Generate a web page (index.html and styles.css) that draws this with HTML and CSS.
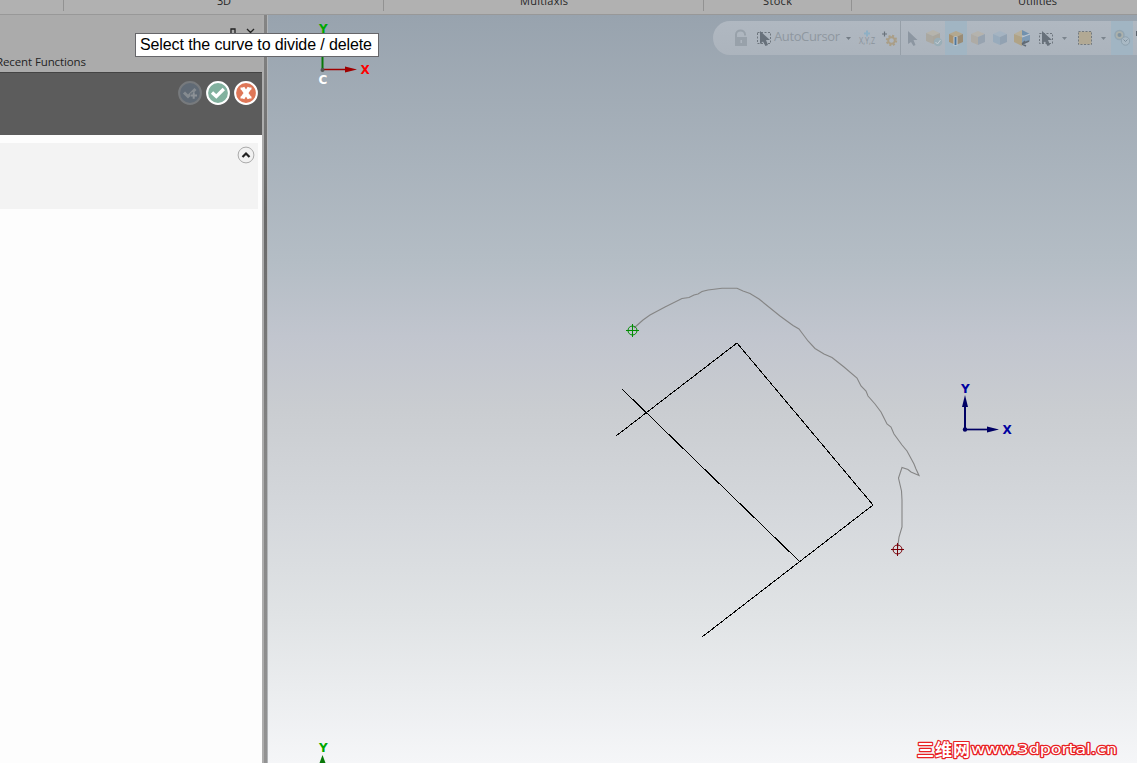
FILE: index.html
```html
<!DOCTYPE html>
<html lang="en">
<head>
<meta charset="utf-8">
<title>Divide / delete</title>
<link rel="stylesheet" href="styles.css">
</head>
<body>
<div class="app">
  <header class="ribbon">
    <div class="group g-first"></div>
    <div class="group g-wide"><svg width="14" height="14"><text x="0" y="5" textLength="14">3D</text></svg></div>
    <div class="group g-wide"><svg width="48" height="14"><text x="0" y="5" textLength="48">Multiaxis</text></svg></div>
    <div class="group g-stock"><svg width="29" height="14"><text x="0" y="5" textLength="29">Stock</text></svg></div>
    <div class="group g-util"><svg width="39" height="14"><text x="0" y="5" textLength="39">Utilities</text></svg></div>
  </header>
  <div class="work">
    <aside class="panel">
      <div class="panel-head">
        <svg class="window-icons" width="32" height="16" viewBox="0 0 32 16"><path d="M4 10V2h4v8M2 10h9M8 2v8M20 2l7 7M27 2l-7 7" fill="none" stroke="#222" stroke-width="1.3"/></svg>
        <svg class="recent" width="90" height="18"><text x="-4" y="12" textLength="90">Recent Functions</text></svg>
      </div>
      <div class="actions">
        <svg width="24" height="24" viewBox="0 0 24 24"><circle cx="12" cy="12" r="10.900" fill="#606a75" stroke="#777a7d" stroke-width="2"/><path d="M6 11.500l4 4 7.500-7.500" fill="none" stroke="#858b90" stroke-width="3"/><path d="M12 14.500h7.500M15.700 11v7.500" stroke="#606a75" stroke-width="4"/><path d="M12.500 14.500h6.500M15.700 11.300v6.500" stroke="#8d9297" stroke-width="2"/></svg>
        <svg width="24" height="24" viewBox="0 0 24 24"><circle cx="12" cy="12" r="10.900" fill="#82b19f" stroke="#fff" stroke-width="2"/><path d="M6 11.500l4.300 4 7.500-7.500" fill="none" stroke="#fff" stroke-width="3.300"/></svg>
        <svg width="24" height="24" viewBox="0 0 24 24"><circle cx="12" cy="12" r="10.900" fill="#df7758" stroke="#fff" stroke-width="2"/><path d="M8.500 7l7 10M15.500 7l-7 10" stroke="#fff" stroke-width="4"/><path d="M6.500 7.500h4M13.500 7.500h4M6.500 16.500h4M13.500 16.500h4" stroke="#fff" stroke-width="2"/></svg>
      </div>
      <div class="section">
        <svg width="18" height="18" viewBox="0 0 18 18"><circle cx="9" cy="9" r="7.900" fill="#f1f1f1" stroke="#aaa"/><path d="M5.500 11L9 7.500l3.500 3.500" fill="none" stroke="#222" stroke-width="2.200"/></svg>
      </div>
    </aside>
    <div class="splitter"></div>
    <main class="viewport">
      <svg class="drawing" width="869" height="748" viewBox="268 15 869 748">
        <g fill="none" stroke="#000" shape-rendering="crispEdges">
          <path d="M616 436L737 343 873 505 702 637M622 389L800 562"/>
        </g>
        <path fill="none" stroke="#858585" stroke-width="1.100" d="M634 328L643 320 650 315 665 307 682 298.500 689 297.500 694 295 698 294 702 291.500 708 290 722 288.300 737 288.300 743 291 750 293.500 759 299 780 316 793 325.500 799 329 802 333 808 341 815 348.500 824 354 832 357.500 844 367 857 378 861 386 866 391 868 396 875 404 881 412 887 424 891 427 894 434 902 445 907 451 914 464 916 469 919 475.500 911 472 908 469.500 902 467.500 898.500 478 901.500 491 902 500 902 527 899 537 897.500 549"/>
        <g fill="none" stroke="#008c00"><circle cx="632.500" cy="330.500" r="4.500"/><path d="M626 330.500h13M632.500 324v13"/></g>
        <g fill="none" stroke="#780008"><circle cx="897.500" cy="549.500" r="4.500"/><path d="M891 549.500h13M897.500 543v13"/></g>
        <g class="axis">
          <path d="M322.500 70V50" stroke="#087808" stroke-width="2"/><path d="M323 69.500h25" stroke="#a00000" stroke-width="1.500"/><path d="M345 66.500l12 3-12 3z" fill="#a00000"/><circle cx="322.500" cy="70" r="2" fill="#555"/>
          <text x="319" y="33" fill="#00a800">Y</text><text x="360.500" y="74" fill="#f00">X</text><text x="318.500" y="84" fill="#fff">C</text>
          <path d="M965 430V402" stroke="#000064" stroke-width="2"/><path d="M965 395l3 12h-6z" fill="#000064"/><path d="M965 429.500h24" stroke="#000064" stroke-width="1.700"/><path d="M987 426.500l12 3-12 3z" fill="#000064"/><circle cx="965" cy="429.500" r="2.200" fill="#000064"/>
          <text x="961" y="393" fill="#0000a0">Y</text><text x="1002.500" y="434" fill="#0000a0">X</text>
          <text x="319" y="752" fill="#00a800">Y</text><path d="M322.500 755l3 8h-6z" fill="#087808"/>
        </g>
        <g class="mark"><text class="mark-cjk" x="917" y="756" textLength="53">三维网</text><text class="mark-url" x="971" y="754" textLength="146" lengthAdjust="spacingAndGlyphs">www.3dportal.cn</text></g>
      </svg>
      <div class="toolbar">
        <div class="tool" style="width:38px"><svg width="38" height="34" viewBox="0 0 38 34"><path d="M23 16v-2.500c0-5.500 9-5.500 9 0v1" fill="none" stroke="#98a1aa" stroke-width="2"/><path d="M22 16h12v9H22zm5.500 3v3h1.500v-3z" fill="#98a1aa" fill-rule="evenodd"/></svg></div>
        <div class="tool" style="width:104px"><svg width="104" height="34" viewBox="0 0 104 34"><rect x="6.500" y="11.500" width="13" height="11" fill="none" stroke="#6e767e" stroke-dasharray="2 1.500"/><path d="M9 10v13l3-2.500 2.500 4.500 2.500-1-2-5h4z" fill="#68717b"/><text class="cursor-label" x="23" y="20" textLength="66">AutoCursor</text><path d="M95 16h5l-2.500 3z" fill="#737c85"/></svg></div>
        <div class="tool" style="width:24px"><svg width="24" height="34" viewBox="0 0 24 34"><path d="M9 12.500h6M12 9.500v6" stroke="#8eb0c5" stroke-width="2"/><text class="xyz" x="4" y="23" textLength="16" lengthAdjust="spacingAndGlyphs">X,Y,Z</text></svg></div>
        <div class="tool edge" style="width:22px"><svg width="21" height="34" viewBox="0 0 21 34"><path d="M3 13h5M5.500 10.500v5" stroke="#68717a" stroke-width="1.200"/><circle cx="12.500" cy="19.500" r="4.700" fill="none" stroke="#aa9e87" stroke-width="2" stroke-dasharray="2 1.700"/><circle cx="12.500" cy="19.500" r="3.300" fill="none" stroke="#aa9e87" stroke-width="2"/></svg></div>
        <div class="tool" style="width:22px"><svg width="22" height="34" viewBox="0 0 22 34"><path d="M7 10v13l3-2 2.500 4 2-1-2-5h4z" fill="#8c96a1"/></svg></div>
        <div class="tool" style="width:22px"><svg width="22" height="34" viewBox="0 0 22 34"><path d="M3 12l7-3 7 3-7 3z" fill="#b6b4ac"/><path d="M3 12l7 3v8l-7-3z" fill="#aaa8a1"/><path d="M10 15l7-3v8l-7 3z" fill="#a9a69d"/><circle cx="15" cy="21" r="4.300" fill="#9aaeb7"/><path d="M12.500 21l2 2 3-4" fill="none" stroke="#c7d0d6"/></svg></div>
        <div class="tool active" style="width:22px"><svg width="22" height="34" viewBox="0 0 22 34"><path d="M4 13l7-3 7 3-7 3z" fill="#b3a88f"/><path d="M4 13l7 3v8l-7-3z" fill="#a7916f"/><path d="M11 16l7-3v8l-7 3z" fill="#9a8c76"/><path d="M8.500 15.500h4v9h-4z" fill="#c5d0d8"/><path d="M10.500 16v8" stroke="#50769a" stroke-width="2"/></svg></div>
        <div class="tool" style="width:22px"><svg width="22" height="34" viewBox="0 0 22 34"><path d="M4 13l7-3 7 3-7 3z" fill="#b5b3ad"/><path d="M4 13l7 3v8l-7-3z" fill="#aeaba5"/><path d="M11 16l7-3v8l-7 3z" fill="#97a3b0"/></svg></div>
        <div class="tool" style="width:22px"><svg width="22" height="34" viewBox="0 0 22 34"><path d="M4 13l7-3 7 3-7 3z" fill="#a5b4c2"/><path d="M4 13l7 3v8l-7-3z" fill="#98abbc"/><path d="M11 16l7-3v8l-7 3z" fill="#92a2b2"/></svg></div>
        <div class="tool" style="width:22px"><svg width="22" height="34" viewBox="0 0 22 34"><path d="M3 13l8-4v7z" fill="#b8b09b"/><path d="M3 13l8 3v9l-8-4z" fill="#b0a386"/><path d="M11 16l8-3v7l-8 4z" fill="#7f9bb5"/><path d="M11 9l8 4-5 2-3-1z" fill="#7191ae"/><path d="M11 16l8-3" stroke="#bec8d1" stroke-width="1.200"/><path d="M18 20l-7 3m0 0l3-3m-3 3l4 2" fill="none" stroke="#626b74" stroke-width="1.500"/></svg></div>
        <div class="tool" style="width:44px"><svg width="44" height="34" viewBox="0 0 44 34"><rect x="6.500" y="12.500" width="13" height="10" fill="none" stroke="#6e767e" stroke-dasharray="2 1.500"/><path d="M9 10v13l3-2.500 2.500 4.500 2.500-1-2-5h4z" fill="#68717b"/><path d="M29 16h5l-2.500 3z" fill="#7b848d"/></svg></div>
        <div class="tool" style="width:34px"><svg width="34" height="34" viewBox="0 0 34 34"><rect x="1.500" y="10.500" width="13" height="13" fill="#b2a994" stroke="#737a80" stroke-dasharray="2 1.500"/><path d="M24 16h5l-2.500 3z" fill="#7b848d"/></svg></div>
        <div class="tool active" style="width:22px"><svg width="22" height="34" viewBox="0 0 22 34"><circle cx="8.500" cy="14" r="4.500" fill="#abb1ac" stroke="#92a5b2" stroke-width="1.500"/><circle cx="8.500" cy="14" r="2" fill="#7f929f"/><circle cx="14.500" cy="20" r="4.200" fill="#a9b9c4" stroke="#8ea1ae"/><path d="M12.500 18.500l2 2 2-2" fill="none" stroke="#7c8e9b"/></svg></div>
        <div class="tool" style="width:4px"><svg width="4" height="34" viewBox="0 0 4 34"><path d="M3 10h1v5H3z" fill="#59616a"/></svg></div>
      </div>
    </main>
  </div>
  <div class="tooltip"><svg width="240" height="22"><text x="4" y="16" textLength="232">Select the curve to divide / delete</text></svg></div>
</div>
</body>
</html>
```
FILE: styles.css
```css
body { margin: 0; overflow: hidden; }
svg { display: block; flex: none; }
.app { position: relative; width: 1137px; height: 763px; overflow: hidden; display: flex; flex-direction: column; font-family: "Open Sans", "Noto Sans", sans-serif; }
.ribbon { display: flex; flex: none; height: 15px; box-sizing: border-box; background: #b1b1b1; border-bottom: 1px solid #989898; overflow: hidden; }
.group { box-sizing: border-box; flex: none; height: 11px; display: flex; justify-content: center; border-right: 1px solid #929292; }
.g-first { width: 64px; }
.g-wide { width: 320px; }
.g-stock { width: 148px; }
.g-util { width: 371px; }
.group text { font-size: 11px; fill: #262626; }
.work { display: flex; flex: 1; min-height: 0; }
.panel { width: 262px; flex: none; background: #fdfdfd; display: flex; flex-direction: column; }
.panel-head { height: 57px; flex: none; background: #ababab; display: flex; flex-direction: column; justify-content: space-between; box-sizing: border-box; padding-top: 12px; }
.window-icons { align-self: flex-end; margin-right: 3px; }
.recent text { font-size: 11.5px; fill: #242424; }
.actions { height: 63px; flex: none; box-sizing: border-box; background: #5c5c5c; border-top: 1px solid #444; display: flex; justify-content: flex-end; gap: 4px; padding: 8px 4px 0 0; }
.section { width: 258px; height: 66px; flex: none; margin-top: 8px; background: #f3f3f3; display: flex; justify-content: flex-end; box-sizing: border-box; padding: 2.5px 3.5px 0 0; }
.splitter { width: 6px; flex: none; box-sizing: border-box; background: linear-gradient(#858585, #686868 26%, #858585 60%, #929292); border-left: 2px solid #adadad; border-right: 1px solid #b2b5b8; }
.viewport { position: relative; flex: 1; min-width: 0; background: linear-gradient(#98a3ae 0%, #b4bdc5 33%, #c1c5ce 43%, #cacdd1 53%, #d5d8dc 67%, #e0e3e5 80%, #f5f6f8 100%); }
.drawing { overflow: hidden; }
.axis text { font: bold 12px "DejaVu Sans", sans-serif; }
.mark text { fill: #fff; stroke: #e82023; stroke-width: 2.4px; stroke-linejoin: round; paint-order: stroke; }
.mark-cjk { font: bold 17px "Noto Sans CJK SC", sans-serif; }
.mark-url { font: 14.5px "DejaVu Sans", sans-serif; }
.toolbar { position: absolute; left: 445px; top: 6px; height: 34px; width: 424px; overflow: hidden; display: flex; border-radius: 17px 0 0 17px; background: linear-gradient(#b0b8c1, #acb4bd); }
.tool { flex: none; box-sizing: border-box; }
.active { background: #a1b5c3; }
.edge { border-right: 1px solid #969fa8; }
.cursor-label { font-size: 13px; fill: #8e979f; }
.xyz { font-size: 9px; fill: #8a939c; }
.tooltip { position: absolute; left: 135px; top: 33px; box-sizing: border-box; width: 244px; height: 24px; border: 1px solid #66666a; background: #fff; }
.tooltip text { font: 16px "Liberation Sans", Arial, sans-serif; fill: #000; }
```
